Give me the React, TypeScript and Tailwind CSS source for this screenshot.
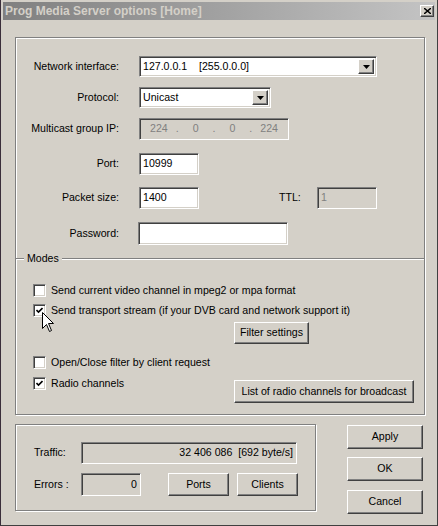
import React from 'react';

const raised =
  'bg-[#d4d0c8] border border-t-white border-l-white border-r-[#404040] border-b-[#404040] shadow-[inset_-1px_-1px_0_#808080]';
const sunken =
  'border border-t-[#808080] border-l-[#808080] border-r-white border-b-white shadow-[inset_1px_1px_0_#404040,inset_-1px_-1px_0_#d4d0c8]';
const etched = 'border border-[#808080] shadow-[inset_1px_1px_0_#fff,1px_1px_0_#fff]';

function Arrow() {
  return (
    <svg width="7" height="4" viewBox="0 0 7 4">
      <polygon points="0,0 7,0 3.5,4" fill="#000" />
    </svg>
  );
}

function Combo({ value, width }: { value: string; width: string }) {
  return (
    <div className={`${sunken} ${width} h-[21px] bg-white flex items-center p-[2px]`}>
      <span className="flex-1 pl-[1px] whitespace-pre">{value}</span>
      <div className={`${raised} w-[16px] h-full flex items-center justify-center`}>
        <Arrow />
      </div>
    </div>
  );
}

function Field({
  value,
  width,
  disabled,
  readOnly,
  right,
}: {
  value: string;
  width: string;
  disabled?: boolean;
  readOnly?: boolean;
  right?: boolean;
}) {
  let bg = 'bg-white';
  if (disabled) bg = 'bg-[#d4d0c8] text-[#808080]';
  else if (readOnly) bg = 'bg-[#d4d0c8]';
  return (
    <div className={`${sunken} ${width} flex items-center px-[3px] ${bg} ${right ? 'justify-end' : ''}`}>
      {value}
    </div>
  );
}

function Check({ checked, label }: { checked?: boolean; label: string }) {
  return (
    <div className="flex items-center h-[13px]">
      <div className={`${sunken} w-[13px] h-[13px] bg-white flex items-center justify-center`}>
        {checked && (
          <svg width="7" height="7" viewBox="0 0 7 7">
            <polyline points="0.5,3 2.5,5 6.5,1" fill="none" stroke="#000" strokeWidth="1.6" />
          </svg>
        )}
      </div>
      <span className="ml-[5px] whitespace-nowrap">{label}</span>
    </div>
  );
}

function Button({ label, className }: { label: string; className: string }) {
  return <div className={`${raised} ${className} flex items-center justify-center`}>{label}</div>;
}

function Row({ label, children, top }: { label: string; children: React.ReactNode; top: string }) {
  return (
    <div className={`flex items-center ${top}`}>
      <div className="w-[103px] text-right">{label}</div>
      <div className="ml-5 flex items-center">{children}</div>
    </div>
  );
}

export default function App() {
  return (
    <div className="relative w-[438px] h-[526px] bg-[#d4d0c8] border-l border-l-[#3a2e3a] border-r border-r-[#404040] border-b border-b-[#404040] text-[10.6px] text-black font-['Liberation_Sans',Arial,sans-serif] overflow-hidden">
      {/* title bar */}
      <div className="mt-[2px] mx-[2px] h-[18px] bg-gradient-to-r from-[#808080] to-[#c4c4c4] flex items-center justify-between pl-[2px] pr-[1px]">
        <span className="font-bold text-[12px] text-[#d4d0c8]">Prog Media Server options [Home]</span>
        <div className={`${raised} w-[14px] h-[12px] flex items-center justify-center`}>
          <svg width="7" height="6" viewBox="0 0 7 6">
            <path d="M0 0 L7 6 M7 0 L0 6" stroke="#000" strokeWidth="1.4" />
          </svg>
        </div>
      </div>

      <div className="px-[14px] pt-[17px]">
        {/* main group */}
        <div className={`${etched} w-[410px] h-[378px] flex flex-col`}>
          <Row label="Network interface:" top="mt-[18px]">
            <Combo value="127.0.0.1    [255.0.0.0]" width="w-[238px]" />
          </Row>
          <Row label="Protocol:" top="mt-[10px]">
            <Combo value="Unicast" width="w-[132px]" />
          </Row>
          <Row label="Multicast group IP:" top="mt-[10px]">
            <div className={`${sunken} w-[150px] h-[22px] bg-[#d4d0c8] text-[#808080] flex items-center px-[2px]`}>
              {['224', '0', '0', '224'].map((n, i) => (
                <React.Fragment key={i}>
                  <span className="flex-1 text-center">{n}</span>
                  {i < 3 && <span>.</span>}
                </React.Fragment>
              ))}
            </div>
          </Row>
          <Row label="Port:" top="mt-[13px]">
            <Field value="10999" width="w-[60px] h-[22px]" />
          </Row>
          <Row label="Packet size:" top="mt-[12px]">
            <Field value="1400" width="w-[60px] h-[22px]" />
            <span className="ml-[80px] w-[38px]">TTL:</span>
            <Field value="1" width="w-[60px] h-[22px]" disabled />
          </Row>
          <Row label="Password:" top="mt-[13px]">
            <div className="-ml-px">
              <Field value="" width="w-[150px] h-[23px]" />
            </div>
          </Row>

          {/* Modes */}
          <div className="mt-[13px] relative h-[2px] border-t border-t-[#808080] border-b border-b-white">
            <span className="absolute left-[8px] -top-[8px] px-[3px] bg-[#d4d0c8] leading-[14px]">Modes</span>
          </div>
          <div className="pl-[17px] flex flex-col">
            <div className="mt-[24px]">
              <Check label="Send current video channel in mpeg2 or mpa format" />
            </div>
            <div className="mt-[7px]">
              <Check checked label="Send transport stream (if your DVB card and network support it)" />
            </div>
            <Button label="Filter settings" className="ml-[201px] mt-[5px] w-[75px] h-[22px]" />
            <div className="mt-[12px]">
              <Check label="Open/Close filter by client request" />
            </div>
            <div className="flex items-start mt-[8px]">
              <Check checked label="Radio channels" />
              <Button label="List of radio channels for broadcast" className="ml-auto mr-[10px] mt-[3px] w-[180px] h-[23px]" />
            </div>
          </div>
        </div>

        {/* bottom */}
        <div className="flex mt-[9px]">
          <div className={`${etched} w-[303px] h-[87px] flex flex-col`}>
            <div className="flex items-center mt-[17px]">
              <span className="ml-[18px] w-[47px]">Traffic:</span>
              <Field value="32 406 086  [692 byte/s]" width="w-[216px] h-[22px] whitespace-pre" readOnly right />
            </div>
            <div className="flex items-center mt-[9px]">
              <span className="ml-[18px] w-[47px]">Errors :</span>
              <Field value="0" width="w-[60px] h-[23px]" readOnly right />
              <Button label="Ports" className="ml-[27px] w-[61px] h-[23px]" />
              <Button label="Clients" className="ml-[8px] w-[61px] h-[23px]" />
            </div>
          </div>
          <div className="ml-[31px] mt-px flex flex-col">
            <Button label="Apply" className="w-[76px] h-[24px]" />
            <Button label="OK" className="mt-[8px] w-[76px] h-[24px]" />
            <Button label="Cancel" className="mt-[9px] w-[76px] h-[24px]" />
          </div>
        </div>
      </div>

      {/* mouse cursor */}
      <svg className="absolute left-[41px] top-[312px]" width="13" height="21" viewBox="0 0 13 21">
        <path
          d="M0.5 0.5 L0.5 16.5 L4.5 12.5 L7.5 19.5 L9.5 18.5 L6.5 11.5 L11.5 11.5 Z"
          fill="#fff"
          stroke="#000"
          strokeWidth="1"
        />
      </svg>
    </div>
  );
}
